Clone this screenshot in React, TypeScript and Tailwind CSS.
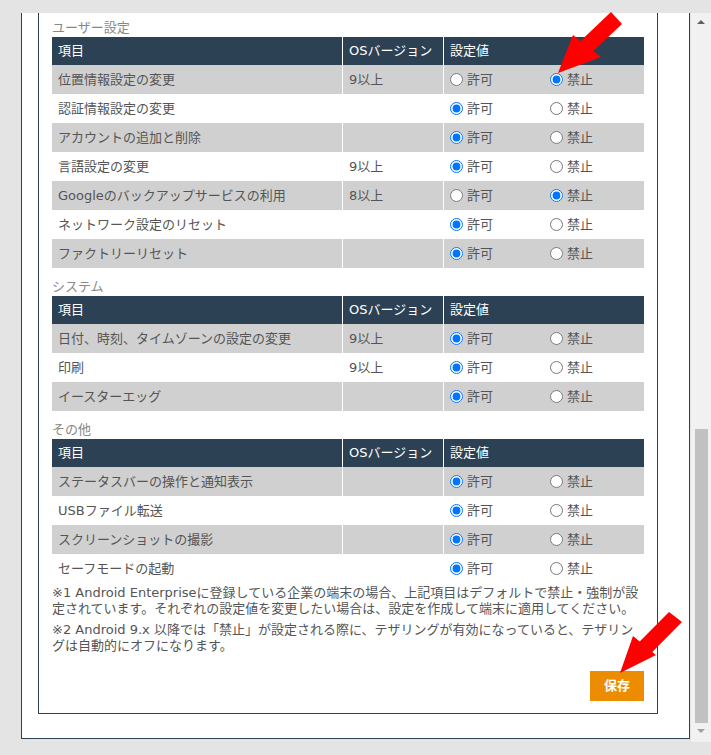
import { useState } from 'react';

type SettingRow = {
  name: string;
  version: string;
  value: 'allow' | 'deny';
};

const sections: { title: string; rows: SettingRow[] }[] = [
  {
    title: 'ユーザー設定',
    rows: [
      { name: '位置情報設定の変更', version: '9以上', value: 'deny' },
      { name: '認証情報設定の変更', version: '', value: 'allow' },
      { name: 'アカウントの追加と削除', version: '', value: 'allow' },
      { name: '言語設定の変更', version: '9以上', value: 'allow' },
      { name: 'Googleのバックアップサービスの利用', version: '8以上', value: 'deny' },
      { name: 'ネットワーク設定のリセット', version: '', value: 'allow' },
      { name: 'ファクトリーリセット', version: '', value: 'allow' },
    ],
  },
  {
    title: 'システム',
    rows: [
      { name: '日付、時刻、タイムゾーンの設定の変更', version: '9以上', value: 'allow' },
      { name: '印刷', version: '9以上', value: 'allow' },
      { name: 'イースターエッグ', version: '', value: 'allow' },
    ],
  },
  {
    title: 'その他',
    rows: [
      { name: 'ステータスバーの操作と通知表示', version: '', value: 'allow' },
      { name: 'USBファイル転送', version: '', value: 'allow' },
      { name: 'スクリーンショットの撮影', version: '', value: 'allow' },
      { name: 'セーフモードの起動', version: '', value: 'allow' },
    ],
  },
];

// One row of the settings table, with its own radio pair
function SettingTableRow({ row, id, striped }: { row: SettingRow; id: string; striped: boolean }) {
  const [value, setValue] = useState(row.value);

  return (
    <div className={`flex h-[29px] ${striped ? 'bg-[#d0d0d0]' : 'bg-white'}`}>
      <div className="w-[291px] shrink-0 flex items-center px-[6px] border-r border-white">{row.name}</div>
      <div className="w-[101px] shrink-0 flex items-center px-[6px] border-r border-white">{row.version}</div>
      <div className="w-[200px] shrink-0 flex items-center pl-[6px]">
        <label className="w-[100px] shrink-0 flex items-center">
          <input type="radio" name={id} checked={value === 'allow'} className="m-0 mr-[4px] w-[13px] h-[13px]" onChange={() => setValue('allow')} />
          許可
        </label>
        <label className="flex items-center">
          <input type="radio" name={id} checked={value === 'deny'} className="m-0 mr-[4px] w-[13px] h-[13px]" onChange={() => setValue('deny')} />
          禁止
        </label>
      </div>
    </div>
  );
}

function App() {
  return (
    <div className="relative w-[711px] h-[755px] bg-[#e4e4e4] pt-[13px] overflow-hidden font-['DejaVu_Sans','Noto_Sans_CJK_JP',sans-serif] text-[13px] text-[#555]">
      <div className="flex h-[729px]">
        {/* scrolled view, shown at its bottom */}
        <div className="flex-1 overflow-hidden pl-[21px]">
          <div className="w-[669px] border-x border-b border-[#2c4254] bg-white pl-[16px] pb-[24px]">
            <div className="w-[620px] border-x border-b border-[#2c4254] px-[13px] pt-[6px] pb-[12px]">
              {sections.map((section, sectionIndex) => (
                <div key={section.title} className={sectionIndex > 0 ? 'mt-[10px]' : ''}>
                  <h3 className="leading-[18px] text-[#888]">{section.title}</h3>
                  <div className="flex h-[28px] bg-[#2c4254] text-white">
                    <div className="w-[291px] shrink-0 flex items-center px-[6px] border-r border-white">項目</div>
                    <div className="w-[101px] shrink-0 flex items-center px-[6px] border-r border-white">OSバージョン</div>
                    <div className="w-[200px] shrink-0 flex items-center px-[6px]">設定値</div>
                  </div>
                  {section.rows.map((row, rowIndex) => (
                    <SettingTableRow key={row.name} row={row} id={`s${sectionIndex}-r${rowIndex}`} striped={rowIndex % 2 === 0} />
                  ))}
                </div>
              ))}
              <p className="mt-[2px] leading-[16px] whitespace-nowrap">
                ※1 Android Enterpriseに登録している企業の端末の場合、上記項目はデフォルトで禁止・強制が設<br />
                定されています。それぞれの設定値を変更したい場合は、設定を作成して端末に適用してください。
              </p>
              <p className="mt-[5px] leading-[16px] whitespace-nowrap">
                ※2 Android 9.x 以降では「禁止」が設定される際に、テザリングが有効になっていると、テザリン<br />
                グは自動的にオフになります。
              </p>
              <div className="flex justify-end mt-[17px]">
                <button type="button" className="w-[54px] h-[30px] bg-[#ec8c00] text-white font-bold cursor-pointer">保存</button>
              </div>
            </div>
          </div>
        </div>
        {/* scrollbar */}
        <div className="w-[20px] bg-[#f1f1f1] relative">
          <div className="absolute left-[6px] top-[7px] w-0 h-0 border-x-[4px] border-x-transparent border-b-[4px] border-b-[#606060]" />
          <div className="absolute left-[4px] top-[416px] w-[13px] h-[294px] bg-[#c1c1c1]" />
          <div className="absolute left-[6px] top-[716px] w-0 h-0 border-x-[4px] border-x-transparent border-t-[4px] border-t-[#a0a0a0]" />
        </div>
      </div>

      {/* annotation arrows */}
      <svg className="absolute top-0 left-0 pointer-events-none" width="711" height="755" viewBox="0 0 711 755">
        <polygon points="611,12 622,24 593.4,51.1 601,57 558,73 573,35 580.5,40.9" fill="#ff0000" />
        <polygon points="669,612 682,622 652.3,652 656,655 620,673 633,636 639.7,641.5" fill="#ff0000" />
      </svg>
    </div>
  );
}

export default App;
